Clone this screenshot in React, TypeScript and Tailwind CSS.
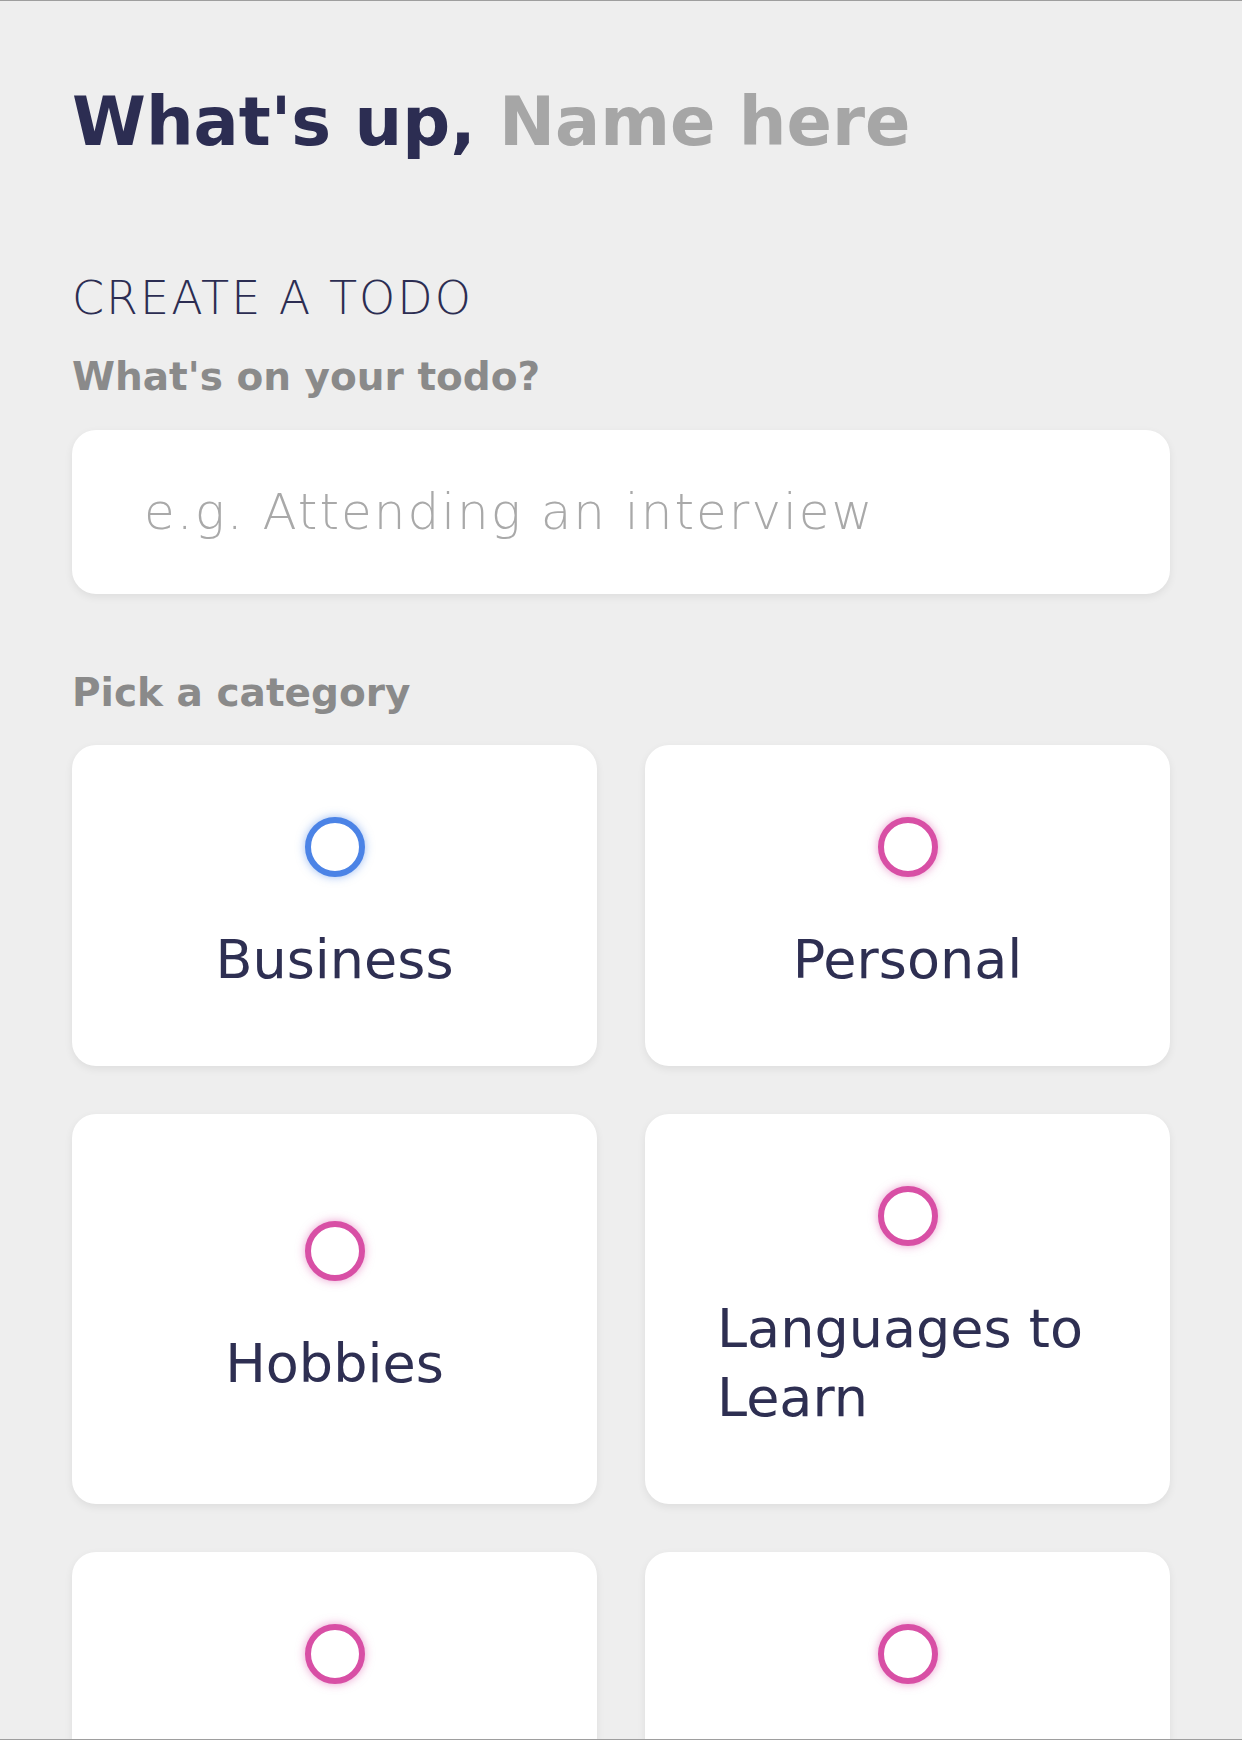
import React from "react";

const categories = [
  { name: "Business", selected: true },
  { name: "Personal", selected: false },
  { name: "Hobbies", selected: false },
  { name: "Languages to Learn", selected: false },
  { name: "Health", selected: false },
  { name: "Shopping", selected: false },
];

function CategoryCard({ name, selected }: { name: string; selected: boolean }) {
  return (
    <div className="flex flex-col items-center justify-center gap-[48px] rounded-[24px] bg-white px-[72px] py-[72px] shadow-[0_3px_8px_rgba(0,0,0,0.07)]">
      <div
        className={
          selected
            ? "h-[60px] w-[60px] shrink-0 rounded-full border-[6px] border-[#4b83e6] bg-white shadow-[0_0_10px_rgba(75,131,230,0.55)]"
            : "h-[60px] w-[60px] shrink-0 rounded-full border-[6px] border-[#d84fa5] bg-white shadow-[0_0_10px_rgba(216,79,165,0.55)]"
        }
      />
      <p className="text-left text-[54px] leading-[69px] text-[#2e2f52]">{name}</p>
    </div>
  );
}

export default function App() {
  return (
    <div className="h-[1740px] w-full overflow-hidden border-y border-[#9e9e9e] bg-[#eeeeee] px-[72px] pt-[88px] font-['DejaVu_Sans',sans-serif]">
      <h1 className="text-[67px] font-bold leading-none text-[#2c2d52]">
        What's up, <span className="text-[#a6a6a6]">Name here</span>
      </h1>

      <h2 className="mt-[119px] text-[46px] font-extralight leading-none tracking-[2px] text-[#2c2d52]">
        CREATE A TODO
      </h2>

      <p className="mt-[36px] text-[39px] font-bold leading-none text-[#8a8a8a]">
        What's on your todo?
      </p>
      <input
        type="text"
        placeholder="e.g. Attending an interview"
        className="mt-[34px] h-[164px] w-full rounded-[24px] bg-white px-[72px] text-[50px] font-extralight tracking-[2px] text-[#2c2d52] shadow-[0_3px_8px_rgba(0,0,0,0.07)] outline-none placeholder:text-[#a9a9a9]"
      />

      <p className="mt-[79px] text-[39px] font-bold leading-none text-[#8a8a8a]">
        Pick a category
      </p>
      <div className="mt-[33px] grid grid-cols-2 gap-[48px]">
        {categories.map(c => (
          <CategoryCard key={c.name} name={c.name} selected={c.selected} />
        ))}
      </div>
    </div>
  );
}
